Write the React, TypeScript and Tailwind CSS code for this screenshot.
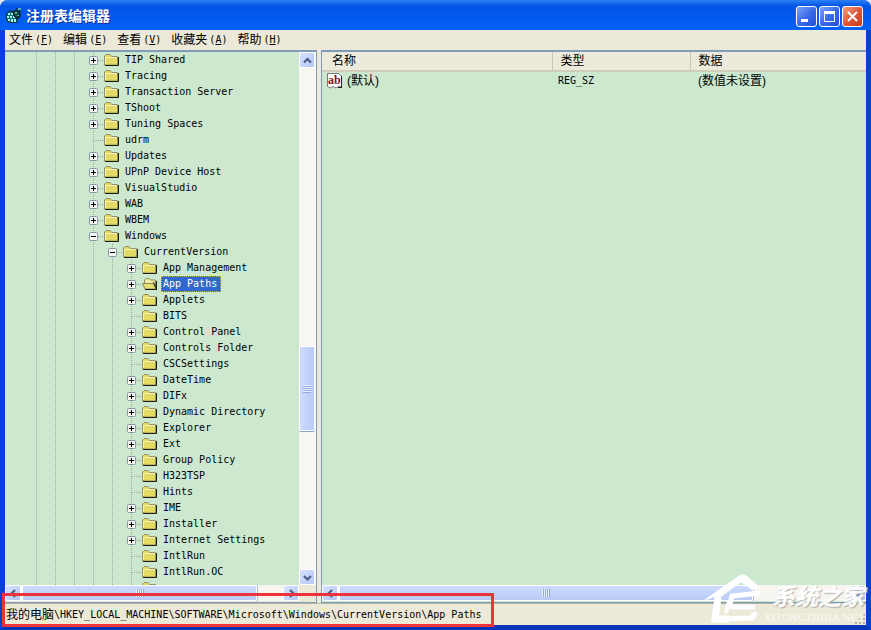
import type { ReactNode } from "react";

type Node = { name: string; depth: number; box?: "+" | "-"; open?: boolean };

const level4: [string, boolean][] = [
  ["TIP Shared", true],
  ["Tracing", true],
  ["Transaction Server", true],
  ["TShoot", true],
  ["Tuning Spaces", true],
  ["udrm", false],
  ["Updates", true],
  ["UPnP Device Host", true],
  ["VisualStudio", true],
  ["WAB", true],
  ["WBEM", true],
];

const level6: [string, boolean][] = [
  ["App Management", true],
  ["App Paths", true],
  ["Applets", true],
  ["BITS", false],
  ["Control Panel", true],
  ["Controls Folder", true],
  ["CSCSettings", false],
  ["DateTime", true],
  ["DIFx", true],
  ["Dynamic Directory", true],
  ["Explorer", true],
  ["Ext", true],
  ["Group Policy", true],
  ["H323TSP", false],
  ["Hints", false],
  ["IME", true],
  ["Installer", true],
  ["Internet Settings", true],
  ["IntlRun", false],
  ["IntlRun.OC", false],
  ["", false],
];

const nodes: Node[] = [
  ...level4.map(([name, has]): Node => ({ name, depth: 4, box: has ? "+" : undefined })),
  { name: "Windows", depth: 4, box: "-" },
  { name: "CurrentVersion", depth: 5, box: "-" },
  ...level6.map(([name, has]): Node => ({
    name,
    depth: 6,
    box: has ? "+" : undefined,
    open: name === "App Paths",
  })),
];

const menus: [string, string][] = [
  ["文件", "F"],
  ["编辑", "E"],
  ["查看", "V"],
  ["收藏夹", "A"],
  ["帮助", "H"],
];

const sans = "font-['Liberation_Sans','Noto_Sans_CJK_SC',sans-serif]";
const mono = "font-['DejaVu_Sans_Mono','Noto_Sans_CJK_SC',monospace]";

function Guide() {
  return (
    <svg width="19" height="16" className="shrink-0" aria-hidden="true">
      <path d="M9.5 0V16" stroke="#9aa99c" strokeDasharray="1 1" />
    </svg>
  );
}

function Branch({ box }: { box?: "+" | "-" }) {
  const lines = (
    <svg width="20" height="16" aria-hidden="true">
      <path d="M9.5 0V16M10 8.5H20" stroke="#9aa99c" strokeDasharray="1 1" />
      {box && (
        <>
          <rect x="5.5" y="4.5" width="8" height="8" rx="1" fill="#f6f6f2" stroke="#8496a8" />
          <path d={box === "+" ? "M7 8.5H12M9.5 6V11" : "M7 8.5H12"} stroke="#000" />
        </>
      )}
    </svg>
  );
  return box ? (
    <button className="shrink-0" aria-label={box === "+" ? "展开" : "折叠"}>
      {lines}
    </button>
  ) : (
    <span className="shrink-0">{lines}</span>
  );
}

function Folder({ open }: { open?: boolean }) {
  return (
    <svg width="16" height="16" className="shrink-0" aria-hidden="true">
      {open ? (
        <>
          <path d="M2.5 12V4L4 2.500H7L8.500 4H13.500V12Z" fill="#f0eca4" stroke="#8b8b5a" />
          <path d="M0.500 7.500H11L14 13H3Z" fill="#e6df72" stroke="#8b8b5a" />
          <path d="M11.500 6L14.500 13M14.500 5V14M3 13.500H15" stroke="#1c1c10" fill="none" />
        </>
      ) : (
        <>
          <path d="M0.500 13V4L2 2.500H6L7.500 4.500H13.500V13Z" fill="#e2da62" stroke="#92926a" />
          <path d="M1.500 12V5.500H13" stroke="#f6f2b4" fill="none" />
          <path d="M1 13.500H14.500V5" stroke="#1c1c10" fill="none" />
        </>
      )}
    </svg>
  );
}

function Arrow({ dir, label }: { dir: "up" | "down" | "left" | "right"; label: string }) {
  const d = {
    up: "M4 9.500L7.500 6L11 9.500",
    down: "M4 6L7.500 9.500L11 6",
    left: "M9 4L5.500 7.500L9 11",
    right: "M6 4L9.500 7.500L6 11",
  }[dir];
  return (
    <button
      aria-label={label}
      className="flex size-4 shrink-0 items-center justify-center rounded-xs border border-white bg-linear-to-br from-[#d6e1fd] to-[#b4c8f6]"
    >
      <svg width="15" height="15" className="shrink-0" aria-hidden="true">
        <path d={d} fill="none" stroke="#4d6185" strokeWidth="2.2" />
      </svg>
    </button>
  );
}

function HScroll({ thumb }: { thumb: string }) {
  return (
    <div className="flex h-4 min-w-0 flex-1 bg-[#f6f5ef]">
      <Arrow dir="left" label="向左滚动" />
      <div className="flex min-w-0 flex-1 pl-px">
        <div
          className={`flex items-center justify-center gap-px rounded-xs border border-white bg-linear-to-b from-[#cddafd] to-[#b9cbf6] shadow-[1px_0_0_#a9bbdc] ${thumb}`}
        >
          {[0, 1, 2, 3].map((i) => (
            <span key={i} className="h-2 w-px bg-[#eef4fe] shadow-[1px_0_0_#8fa9e0]" />
          ))}
        </div>
      </div>
      <Arrow dir="right" label="向右滚动" />
    </div>
  );
}

function CaptionButton({ label, close, children }: { label: string; close?: boolean; children: ReactNode }) {
  return (
    <button
      aria-label={label}
      className={`flex size-[21px] items-center justify-center rounded-[3px] border border-white bg-linear-to-br ${
        close ? "from-[#f0a088] via-[#e0573a] to-[#c93c17]" : "from-[#7ea4f5] via-[#3a6be8] to-[#2350d8]"
      }`}
    >
      <svg width="19" height="19" className="shrink-0" fill="none" stroke="#fff" aria-hidden="true">
        {children}
      </svg>
    </button>
  );
}

function RegistryIcon() {
  return (
    <svg width="16" height="16" viewBox="0 0 16 16" aria-hidden="true">
      <path d="M0.500 6.500L4 4L9 5L11 7V15.500H4L0.500 13.500Z" fill="#0f6f74" stroke="#06303c" />
      <path
        d="M2 6H4V8H2ZM5 6H7V8H5ZM1 9H3V11H1ZM4 9H6V11H4ZM7 9H9V11H7ZM2 12H4V14H2ZM5 12H7V15H5ZM8 12H10V15H8Z"
        fill="#a6f5ec"
      />
      <path d="M7 5L10 3L14 5V10L11 12L8 9Z" fill="#123f40" stroke="#061a1e" />
      <path d="M9 5H11V7H9ZM12 1H15V3H12ZM11 8H13V9H11Z" fill="#4fb5a8" />
      <path d="M10 2L12 1M14 3V6" stroke="#0a2a2e" />
    </svg>
  );
}

function Watermark() {
  return (
    <div className="pointer-events-none absolute right-0.5 bottom-0 flex items-end text-white" aria-hidden="true">
      <svg width="70" height="50" viewBox="0 0 70 50" className="mb-0.5" fill="none" stroke="#fff">
        <path d="M2 27L38 2Q42 0 45 3L59 15L50 17L39 9L19 24H11L8 26Z" fill="#fff" stroke="none" />
        <path d="M16 24L13 46H27" strokeWidth="7" />
        <path d="M27 35L30 23L58 20M28 34H53M22 46L50 45L54 39" strokeWidth="5" />
        <path d="M24 40L27 28" strokeWidth="4" />
      </svg>
      <div className="-ml-2 flex flex-col items-end">
        <span className="font-['Noto_Sans_CJK_SC',sans-serif] text-[23px] leading-7 font-black italic opacity-90 [text-shadow:1px_1px_1px_#aaa]">
          系统之家
        </span>
        <span className="font-['Liberation_Serif',serif] text-[11px] leading-4 opacity-80">XITONGZHIJIA.NET</span>
      </div>
    </div>
  );
}

export default function App() {
  return (
    <div className="h-screen overflow-hidden bg-[#dfe6f2]">
      <div
        className={`relative flex h-full flex-col rounded-t-lg border-r-[5px] border-b-[5px] border-l-[5px] border-[#0a40d4] border-b-[#0636b8] bg-[#ece9d8] text-xs text-black ${sans}`}
      >
        <header className="-mx-[5px] flex h-[30px] shrink-0 items-center gap-1 rounded-t-lg bg-linear-to-b from-[#2b80f6] via-[#0354e4] via-20% to-[#0262fa] pr-2 pl-1.5">
          <RegistryIcon />
          <h1 className="flex-1 pt-0.5 text-sm font-bold text-white [text-shadow:1px_1px_0_#0a2f9c]">注册表编辑器</h1>
          <div className="flex gap-0.5 pt-0.5">
            <CaptionButton label="最小化">
              <path d="M4 13.500H11" strokeWidth="3" />
            </CaptionButton>
            <CaptionButton label="最大化">
              <path d="M4.500 5.500H14.500V14.500H4.500Z" />
              <path d="M4 5.500H15" strokeWidth="3" />
            </CaptionButton>
            <CaptionButton label="关闭" close>
              <path d="M5 5L14 14M14 5L5 14" strokeWidth="2" />
            </CaptionButton>
          </div>
        </header>

        <nav className="flex h-5 shrink-0 items-center gap-2.5 pl-1">
          {menus.map(([name, key]) => (
            <button key={key} className="flex items-center leading-4">
              {name}
              <span className={`ml-0.5 text-[10px] ${mono}`}>
                (<u>{key}</u>)
              </span>
            </button>
          ))}
        </nav>

        <main className="flex min-h-0 flex-1">
          <section className="flex w-[312px] shrink-0 flex-col border-t-2 border-r border-b border-[#7f9db9] bg-[#cce8cf]">
            <div className="flex min-h-0 flex-1">
              <ul className={`min-w-0 flex-1 overflow-hidden pl-[22px] text-[10px] ${mono}`}>
                {nodes.map((n) => (
                  <li key={n.name} className="flex h-4 items-center">
                    {Array.from({ length: n.depth - 1 }, (_, i) => (
                      <Guide key={i} />
                    ))}
                    <Branch box={n.box} />
                    <Folder open={n.open} />
                    {n.name && (
                      <span
                        className={`ml-[3px] h-4 px-0.5 leading-4 whitespace-nowrap ${
                          n.open
                            ? "bg-[#316ac5] pr-1 text-white outline-1 -outline-offset-1 outline-dotted outline-[#e0a850]"
                            : ""
                        }`}
                      >
                        {n.name}
                      </span>
                    )}
                  </li>
                ))}
              </ul>
              <div className="flex w-[17px] shrink-0 flex-col bg-[#f8f7f2]">
                <Arrow dir="up" label="向上滚动" />
                <div className="flex min-h-0 flex-1 flex-col pr-px">
                  <div className="h-[55.4%]" />
                  <div className="flex h-[17%] flex-col items-center justify-center gap-px rounded-xs border border-white bg-linear-to-r from-[#cddafd] to-[#b9cbf6] shadow-[0_1px_0_#8fa5c8]">
                    {[0, 1, 2, 3].map((i) => (
                      <span key={i} className="h-px w-2 bg-[#eef4fe] shadow-[0_1px_0_#8fa9e0]" />
                    ))}
                  </div>
                </div>
                <Arrow dir="down" label="向下滚动" />
              </div>
            </div>
            <div className="flex h-[17px] shrink-0 bg-[#ece9d8]">
              <HScroll thumb="w-[90%]" />
              <div className="w-[17px]" />
            </div>
          </section>

          <div className="w-1 shrink-0 bg-[#ece9d8]" />

          <section className="flex min-w-0 flex-1 flex-col border-t-2 border-b border-l border-[#7f9db9] bg-[#cce8cf]">
            <div className="min-h-0 flex-1">
              <table className="w-full table-fixed text-left">
                <thead>
                  <tr className="h-[19px] border-b-2 border-[#d0cdbb] bg-[#ebeadb]">
                    <th className="w-[230px] p-0 pl-2.5 leading-4 font-normal">名称</th>
                    <th className="w-[138px] border-l border-[#c8c5b2] p-0 pl-2 leading-4 font-normal">类型</th>
                    <th className="border-l border-[#c8c5b2] p-0 pl-2 leading-4 font-normal">数据</th>
                  </tr>
                </thead>
                <tbody>
                  <tr className="h-[18px]">
                    <td className="p-0 pl-1 leading-4">
                      <div className="flex items-center gap-1">
                        <svg width="17" height="16" aria-hidden="true">
                          <path
                            d="M1.500 0.500H12.500L15.500 3.500V14.500L13 13L10 15L7 13.500L4 15L1.500 13.500Z"
                            fill="#fff"
                            stroke="#777"
                          />
                          <path d="M15.500 3V15M12 14.500H16" stroke="#222" />
                          <text x="2" y="11" fontSize="12" fontWeight="700" fill="#8c1010" className="font-['Liberation_Serif',serif]">
                            ab
                          </text>
                        </svg>
                        (默认)
                      </div>
                    </td>
                    <td className={`p-0 pl-1.5 text-[10px] leading-4 ${mono}`}>REG_SZ</td>
                    <td className="p-0 pl-2 leading-4">(数值未设置)</td>
                  </tr>
                </tbody>
              </table>
            </div>
            <div className="flex h-[17px] shrink-0">
              <HScroll thumb="w-[81%]" />
            </div>
          </section>
        </main>

        <footer className="flex h-[22px] shrink-0 items-center border-t border-[#b5b2a0] pl-px whitespace-nowrap">
          <span>我的电脑</span>
          <span className={`flex-1 text-[10px] ${mono}`}>
            \HKEY_LOCAL_MACHINE\SOFTWARE\Microsoft\Windows\CurrentVersion\App Paths
          </span>
          <svg width="12" height="12" className="mt-2" fill="#b8b4a2" aria-hidden="true">
            <path d="M9 1H11V3H9ZM5 5H7V7H5ZM9 5H11V7H9ZM1 9H3V11H1ZM5 9H7V11H5ZM9 9H11V11H9Z" />
          </svg>
        </footer>

        <Watermark />
        <div className="pointer-events-none absolute -bottom-0.5 -left-[3px] h-[34px] w-[492px] border-3 border-[#ee3438]" />
      </div>
    </div>
  );
}
